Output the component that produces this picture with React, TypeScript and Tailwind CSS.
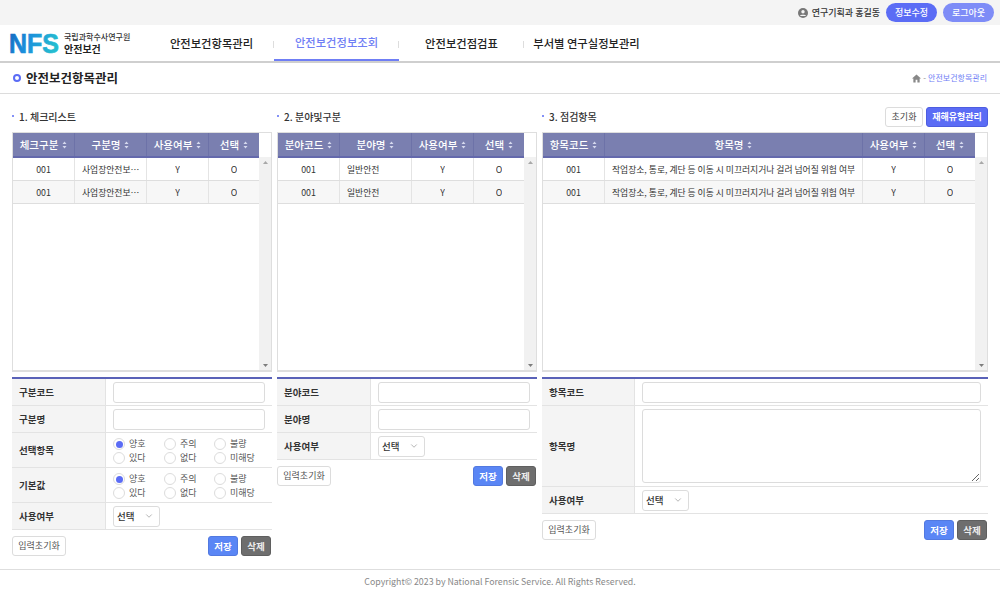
import { ChevronDown } from "lucide-react";

const FONT = "font-['Noto_Sans_CJK_KR','Noto_Sans',sans-serif]";

function SortIcon() {
  return (
    <svg width="5" height="8" viewBox="0 0 5 8" className="ml-1 shrink-0 inline-block">
      <path d="M2.5 0.5 L4.5 3 H0.5 Z M2.5 7.5 L0.5 5 H4.5 Z" fill="#d5d9ee" />
    </svg>
  );
}

function Scrollbar() {
  return (
    <div className="w-[12px] flex flex-col bg-[#f1f1f1]">
      <div className="h-[24px] bg-white" />
      <div className="flex-1 flex flex-col justify-between">
        <div className="h-[10px] flex items-center justify-center">
          <svg width="5" height="3" viewBox="0 0 5 3"><path d="M2.5 0 L5 3 H0 Z" fill="#a8a8a8" /></svg>
        </div>
        <div className="h-[10px] flex items-center justify-center">
          <svg width="5" height="3" viewBox="0 0 5 3"><path d="M2.5 3 L0 0 H5 Z" fill="#7d7d7d" /></svg>
        </div>
      </div>
    </div>
  );
}

type Col = { name: string; w: string; left?: boolean };

function DataTable({ cols, rows }: { cols: Col[]; rows: string[][] }) {
  return (
    <div className="h-[240px] border border-b-2 border-[#dedede] flex">
      <div className="flex-1 min-w-0">
        <div className="flex h-[25px] bg-[#7a7fb0] border-b-2 border-[#6469ac]">
          {cols.map((c) => (
            <div key={c.name} className={`${c.w} flex items-center justify-center border-r border-[#6d72a8] last:border-r-0 text-white text-[10.5px] font-medium`}>
              {c.name}
              <SortIcon />
            </div>
          ))}
        </div>
        {rows.map((r, i) => (
          <div key={i} className={`flex h-[23px] border-b border-[#dedede] ${i % 2 ? "bg-[#f7f7f7]" : "bg-white"}`}>
            {r.map((v, j) => (
              <div key={j} className={`${cols[j].w} flex items-center pt-px border-r border-[#e4e4e4] last:border-r-0 text-[8.8px] text-[#333] min-w-0 ${cols[j].left ? "justify-start pl-[7px] pr-[5px]" : "justify-center"}`}>
                <span className="truncate">{v}</span>
              </div>
            ))}
          </div>
        ))}
      </div>
      <Scrollbar />
    </div>
  );
}

function Row({ label, labelW, h, children }: { label: string; labelW: string; h: string; children: React.ReactNode }) {
  return (
    <div className={`flex ${h} border-b border-[#e3e3e3]`}>
      <div className={`${labelW} shrink-0 bg-[#f4f4f4] border-r border-[#e3e3e3] flex items-center pl-[7px] text-[9.5px] font-bold text-[#333]`}>
        {label}
      </div>
      <div className="flex-1 min-w-0 flex items-center px-[7px]">{children}</div>
    </div>
  );
}

function TextInput() {
  return <input className="w-full h-[21px] bg-white border border-[#dcdcdc] rounded-[3px] outline-none" />;
}

function SelectBox() {
  return (
    <div className="w-[47px] h-[21px] border border-[#dcdcdc] rounded-[3px] bg-white flex items-center justify-between pl-[3px] pr-[5px] text-[9.5px] font-medium text-[#333]">
      선택
      <ChevronDown size={10} strokeWidth={1.5} color="#888" />
    </div>
  );
}

function Radio({ label, on }: { label: string; on?: boolean }) {
  return (
    <div className="flex items-center gap-[4px] text-[9px] text-[#555] h-[14px]">
      <span className="w-[12px] h-[12px] rounded-full border border-[#dcdcdc] bg-white flex items-center justify-center shrink-0">
        {on && <span className="w-[7px] h-[7px] rounded-full bg-[#5b6cf5]" />}
      </span>
      {label}
    </div>
  );
}

function RadioGrid() {
  return (
    <div className="grid grid-cols-[51px_50px_1fr] w-full mt-[2px]">
      <Radio label="양호" on />
      <Radio label="주의" />
      <Radio label="불량" />
      <Radio label="있다" />
      <Radio label="없다" />
      <Radio label="미해당" />
    </div>
  );
}

function FormActions() {
  return (
    <div className="flex justify-between mt-[6px]">
      <button className="w-[54px] h-[20px] border border-[#dcdcdc] rounded-[3px] bg-white text-[9px] text-[#555]">입력초기화</button>
      <div className="flex gap-[3px] mr-[1px]">
        <button className="w-[30px] h-[20px] rounded-[3px] bg-[#5a86f5] border border-[#5279e0] text-white text-[9.5px] font-bold">저장</button>
        <button className="w-[30px] h-[20px] rounded-[3px] bg-[#6e6e6e] border border-[#5f5f5f] text-[#eee] text-[9.5px] font-bold">삭제</button>
      </div>
    </div>
  );
}

function SectionTitle({ text, children }: { text: string; children?: React.ReactNode }) {
  return (
    <div className="h-[26px] flex items-center justify-between">
      <div className="flex items-center gap-[5px] pb-[2px] text-[10px] font-medium text-[#333]">
        <span className="w-[2px] h-[2px] rounded-full bg-[#5b6cf5]" />
        {text}
      </div>
      {children}
    </div>
  );
}

const FORM_TOP = "mt-[5px] border-t-2 border-[#5a62b8]";

function Logo() {
  return (
    <div className="flex items-center gap-[5px]">
      <svg width="50" height="22" viewBox="0 0 50 22">
        <defs>
          <linearGradient id="nfs" x1="0" y1="0" x2="1" y2="0.25">
            <stop offset="0" stopColor="#1466bd" />
            <stop offset="0.45" stopColor="#1b8fdc" />
            <stop offset="1" stopColor="#25bcd0" />
          </linearGradient>
        </defs>
        <text x="0" y="20.5" fontFamily="'Liberation Sans',sans-serif" fontWeight="700" fontSize="27.5" textLength="50" lengthAdjust="spacingAndGlyphs" fill="url(#nfs)" stroke="url(#nfs)" strokeWidth="0.7">
          NFS
        </text>
      </svg>
      <div className="flex flex-col leading-[12px]">
        <span className="text-[8px] font-medium text-[#333]">국립과학수사연구원</span>
        <span className="text-[10px] font-bold text-[#222]">안전보건</span>
      </div>
    </div>
  );
}

function NavItem({ text, active }: { text: string; active?: boolean }) {
  return (
    <div className={`w-[125px] h-full relative flex items-center justify-center text-[11.3px] font-medium ${active ? "text-[#6f7ef5] border-b-2 border-[#6f7ef5]" : "text-[#222]"}`}>
      {text}
      <span className="absolute right-0 top-[16px] w-px h-[7px] bg-[#dddddd]" />
    </div>
  );
}

export default function App() {
  return (
    <div className={`${FONT} w-[1000px] h-[594px] bg-white overflow-hidden flex flex-col`}>
      {/* top bar */}
      <div className="h-[25px] bg-[#f4f4f4] flex items-center justify-end pr-[6px]">
        <svg width="10" height="10" viewBox="0 0 10 10" className="mr-[4px]">
          <circle cx="5" cy="5" r="5" fill="#777" />
          <circle cx="5" cy="3.8" r="1.7" fill="#f4f4f4" />
          <path d="M1.8 8 C2.4 6.2 7.6 6.2 8.2 8 Z" fill="#f4f4f4" />
        </svg>
        <span className="text-[9px] font-medium text-[#333]">연구기획과 홍길동</span>
        <button className="ml-[6px] w-[51px] h-[19px] rounded-full bg-[#5b6cf5] text-white text-[9px] font-medium">정보수정</button>
        <button className="ml-[6px] w-[51px] h-[19px] rounded-full bg-[#7e8cf7] text-white text-[9px] font-medium">로그아웃</button>
      </div>

      {/* nav */}
      <div className="h-[38px] flex border-b-2 border-[#cfcfcf] pl-[9px]">
        <div className="w-[140px] flex items-center"><Logo /></div>
        <NavItem text="안전보건항목관리" />
        <NavItem text="안전보건정보조회" active />
        <NavItem text="안전보건점검표" />
        <div className="w-[125px] flex items-center justify-center text-[11.3px] font-medium text-[#222] whitespace-nowrap">
          부서별 연구실정보관리
        </div>
      </div>

      {/* page title */}
      <div className="h-[31px] flex items-center justify-between border-b border-[#dcdcdc] pl-[13px] pr-[13px]">
        <div className="flex items-center gap-[5px] text-[12.5px] font-bold text-[#222]">
          <span className="w-[8px] h-[8px] rounded-full border-2 border-[#5b6cf5] bg-white" />
          안전보건항목관리
        </div>
        <div className="flex items-center gap-[2px] text-[8px]">
          <svg width="9" height="9" viewBox="0 0 10 10">
            <path d="M5 0.5 L10 5 H8.5 V9.5 H6 V6.5 H4 V9.5 H1.5 V5 H0 Z" fill="#888" />
          </svg>
          <span className="text-[#888]">-</span>
          <span className="text-[#6f7ef5]">안전보건항목관리</span>
        </div>
      </div>

      {/* panels */}
      <div className="flex-1 flex gap-[5px] pl-[12px] pr-[12px] pt-[10px]">
        <section className="w-[260px]">
          <SectionTitle text="1. 체크리스트" />
          <div className="mt-[2px]">
            <DataTable
              cols={[
                { name: "체크구분", w: "w-[62px]" },
                { name: "구분명", w: "w-[72px]", left: true },
                { name: "사용여부", w: "w-[62px]" },
                { name: "선택", w: "w-[50px]" },
              ]}
              rows={[["001", "사업장안전보건관리체계", "Y", "O"], ["001", "사업장안전보건관리체계", "Y", "O"]]}
            />
          </div>
          <div className={FORM_TOP}>
            <Row label="구분코드" labelW="w-[94px]" h="h-[27px]"><TextInput /></Row>
            <Row label="구분명" labelW="w-[94px]" h="h-[27px]"><TextInput /></Row>
            <Row label="선택항목" labelW="w-[94px]" h="h-[35px]"><RadioGrid /></Row>
            <Row label="기본값" labelW="w-[94px]" h="h-[35px]"><RadioGrid /></Row>
            <Row label="사용여부" labelW="w-[94px]" h="h-[27px]"><SelectBox /></Row>
          </div>
          <FormActions />
        </section>

        <section className="w-[260px]">
          <SectionTitle text="2. 분야및구분" />
          <div className="mt-[2px]">
            <DataTable
              cols={[
                { name: "분야코드", w: "w-[62px]" },
                { name: "분야명", w: "w-[72px]", left: true },
                { name: "사용여부", w: "w-[62px]" },
                { name: "선택", w: "w-[50px]" },
              ]}
              rows={[["001", "일반안전", "Y", "O"], ["001", "일반안전", "Y", "O"]]}
            />
          </div>
          <div className={FORM_TOP}>
            <Row label="분야코드" labelW="w-[94px]" h="h-[27px]"><TextInput /></Row>
            <Row label="분야명" labelW="w-[94px]" h="h-[27px]"><TextInput /></Row>
            <Row label="사용여부" labelW="w-[94px]" h="h-[27px]"><SelectBox /></Row>
          </div>
          <FormActions />
        </section>

        <section className="flex-1 min-w-0">
          <SectionTitle text="3. 점검항목">
            <div className="flex gap-[3px]">
              <button className="w-[38px] h-[20px] border border-[#dcdcdc] rounded-[3px] bg-white text-[9px] text-[#444]">초기화</button>
              <button className="w-[62px] h-[20px] rounded-[3px] bg-[#5b6cf5] border border-[#4d5de0] text-white text-[9px] font-bold">재해유형관리</button>
            </div>
          </SectionTitle>
          <div className="mt-[2px]">
            <DataTable
              cols={[
                { name: "항목코드", w: "w-[62px]" },
                { name: "항목명", w: "w-[258px]", left: true },
                { name: "사용여부", w: "w-[62px]" },
                { name: "선택", w: "w-[50px]" },
              ]}
              rows={[
                ["001", "작업장소, 통로, 계단 등 이동 시 미끄러지거나 걸려 넘어질 위험 여부", "Y", "O"],
                ["001", "작업장소, 통로, 계단 등 이동 시 미끄러지거나 걸려 넘어질 위험 여부", "Y", "O"],
              ]}
            />
          </div>
          <div className={FORM_TOP}>
            <Row label="항목코드" labelW="w-[93px]" h="h-[27px]"><TextInput /></Row>
            <Row label="항목명" labelW="w-[93px]" h="h-[81px]">
              <textarea className="w-full h-[74px] bg-white border border-[#dcdcdc] rounded-[3px] outline-none" />
            </Row>
            <Row label="사용여부" labelW="w-[93px]" h="h-[27px]"><SelectBox /></Row>
          </div>
          <FormActions />
        </section>
      </div>

      {/* footer */}
      <div className="h-[25px] border-t border-[#dedede] flex items-center justify-center text-[8.8px] text-[#888]">
        Copyright© 2023 by National Forensic Service. All Rights Reserved.
      </div>
    </div>
  );
}
